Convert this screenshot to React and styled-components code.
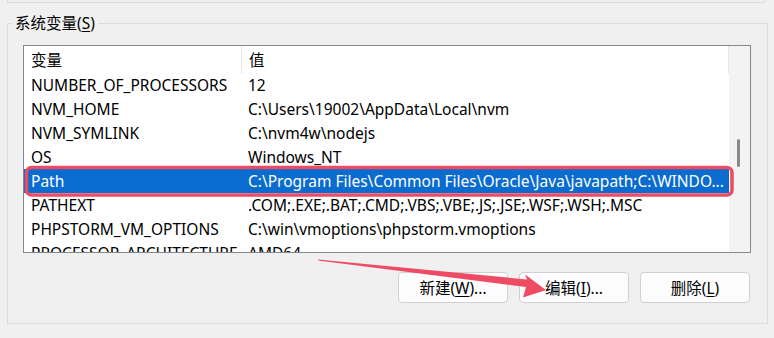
import styled, { createGlobalStyle } from 'styled-components';

const GlobalStyle = createGlobalStyle`
  html, body {
    margin: 0;
    padding: 0;
    background: #f0f0f0;
  }
  body {
    width: 774px;
    height: 338px;
    overflow: hidden;
    font-family: "Noto Sans", "Noto Sans CJK SC", sans-serif;
    font-size: 15.5px;
    color: #000;
  }
`;

const rows = [
  { name: 'NUMBER_OF_PROCESSORS', value: '12' },
  { name: 'NVM_HOME', value: 'C:\\Users\\19002\\AppData\\Local\\nvm' },
  { name: 'NVM_SYMLINK', value: 'C:\\nvm4w\\nodejs' },
  { name: 'OS', value: 'Windows_NT' },
  {
    name: 'Path',
    value: 'C:\\Program Files\\Common Files\\Oracle\\Java\\javapath;C:\\WINDO...',
    selected: true,
  },
  { name: 'PATHEXT', value: '.COM;.EXE;.BAT;.CMD;.VBS;.VBE;.JS;.JSE;.WSF;.WSH;.MSC' },
  { name: 'PHPSTORM_VM_OPTIONS', value: 'C:\\win\\vmoptions\\phpstorm.vmoptions' },
  { name: 'PROCESSOR_ARCHITECTURE', value: 'AMD64' },
];

export default function App() {
  return (
    <>
      <GlobalStyle />
      <Page>
        <PrevGroup />
        <GroupBox>
          <Legend>
            系统变量(<u>S</u>)
          </Legend>
          <ListBox>
            <Table>
              <HeaderRow>
                <HeaderCell>变量</HeaderCell>
                <HeaderCell>值</HeaderCell>
              </HeaderRow>
              {rows.map((row) => (
                <Row key={row.name} $selected={row.selected}>
                  <Cell>{row.name}</Cell>
                  <Cell $value>{row.value}</Cell>
                </Row>
              ))}
            </Table>
            <ScrollTrack>
              <ScrollThumb />
            </ScrollTrack>
          </ListBox>
          <ButtonRow>
            <Button>
              新建(<u>W</u>)...
            </Button>
            <Button>
              编辑(<u>I</u>)...
            </Button>
            <Button>
              删除(<u>L</u>)
            </Button>
          </ButtonRow>
        </GroupBox>
        <Overlay width="774" height="338" viewBox="0 0 774 338">
          <rect
            x="26.5"
            y="167.5"
            width="705.5"
            height="27.5"
            rx="5"
            fill="none"
            stroke="#ec4b64"
            strokeWidth="3.5"
          />
          <polygon
            points="318,259.5 527,279.5 525,274.5 546,290 523,297.5 526,287 318,260.5"
            fill="#ef4b65"
          />
        </Overlay>
      </Page>
    </>
  );
}

const Page = styled.div`
  position: relative;
  width: 774px;
  height: 338px;
`;

const PrevGroup = styled.div`
  height: 2px;
  margin: 0 9px 0 7px;
  border: 1px solid #dcdcdc;
  border-top: none;
`;

const GroupBox = styled.fieldset`
  margin: 10px 6px 0 7px;
  padding: 12px 16px 20px 15px;
  border: 1px solid #dcdcdc;
  min-width: 0;
`;

const Legend = styled.legend`
  margin-left: -11px;
  padding: 0 3px;
  font-size: 15.5px;
  line-height: 20px;

  & > u {
    text-underline-offset: 2px;
  }
`;

const ListBox = styled.div`
  display: flex;
  height: 206px;
  border: 1px solid #828790;
  background: #fff;
  overflow: hidden;
`;

const Table = styled.div`
  flex: 1;
  display: flex;
  flex-direction: column;
`;

const HeaderRow = styled.div`
  display: grid;
  grid-template-columns: 217px 1fr;
  height: 27px;
  flex-shrink: 0;
  border-right: 1px solid #e5e5e5;
`;

const HeaderCell = styled.div`
  padding-left: 7px;
  line-height: 28px;
  & + & {
    border-left: 1px solid #e5e5e5;
  }
`;

const Row = styled.div`
  display: grid;
  grid-template-columns: 218px 1fr;
  height: 24px;
  flex-shrink: 0;
  background: ${(p) => (p.$selected ? '#0a6ccf' : 'transparent')};
  color: ${(p) => (p.$selected ? '#fff' : '#000')};
`;

const Cell = styled.div`
  padding-left: ${(p) => (p.$value ? '6px' : '7px')};
  line-height: 24px;
  white-space: nowrap;
  overflow: hidden;
`;

const ScrollTrack = styled.div`
  position: relative;
  width: 21px;
  flex-shrink: 0;
  background: #f3f3f3;
`;

const ScrollThumb = styled.div`
  position: absolute;
  left: 8px;
  top: 93px;
  width: 3px;
  height: 28px;
  border-radius: 2px;
  background: #8a8a8a;
`;

const ButtonRow = styled.div`
  display: flex;
  justify-content: flex-end;
  gap: 11px;
  margin-top: 19px;
  padding-right: 1px;
`;

const Button = styled.button`
  width: 110px;
  height: 31px;
  padding: 0;
  border: 1px solid #d0d0d0;
  border-radius: 4px;
  background: #fdfdfd;
  font-family: "Noto Sans", "Noto Sans CJK SC", sans-serif;
  font-size: 15.5px;
  color: #000;

  & > u {
    text-underline-offset: 2px;
  }
`;

const Overlay = styled.svg`
  position: absolute;
  left: 0;
  top: 0;
  pointer-events: none;
`;
